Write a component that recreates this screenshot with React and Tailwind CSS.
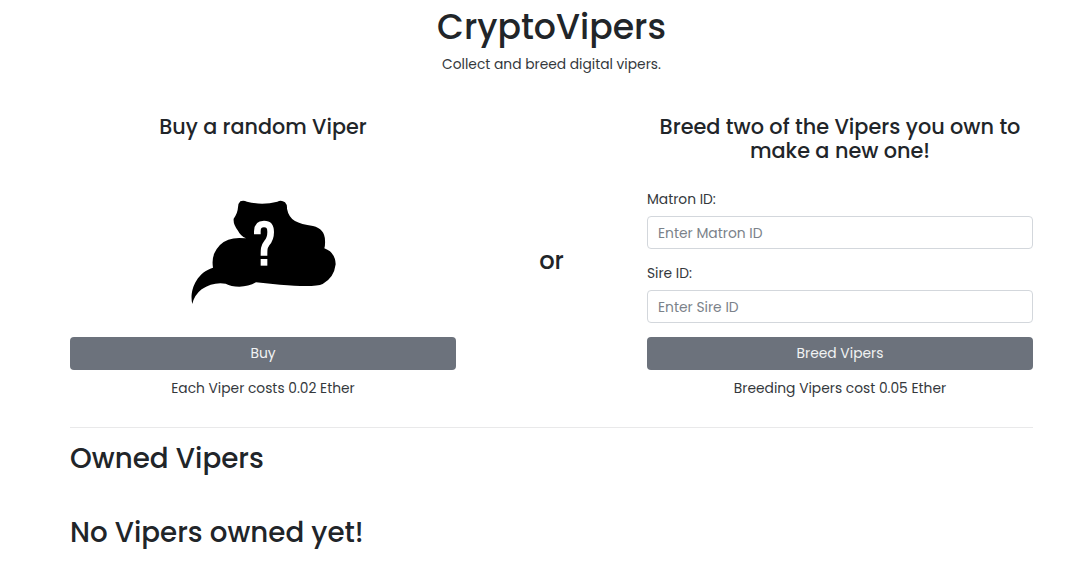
import React, { useState } from 'react';

const ViperSilhouette = () => (
  <svg className="h-[125px] w-[170px]" viewBox="0 0 510 375" aria-hidden="true">
    <path
      d="M181 34 Q190 30 201 35 Q246 47 292 35 Q304 29 315 37 Q322 44 321 56 Q326 82 345 93 Q363 103 399 108 Q434 116 435 151 Q436 164 433 175 Q466 187 467 223 Q462 264 428 282 Q404 293 300 284 L228 277 Q205 290 178 290 Q153 290 137 281 Q98 275 65 298 Q43 315 37 342 C28 309 44 250 99 233 Q95 209 103 190 Q117 159 145 149 Q166 141 198 145 Q181 137 174 122 Q159 103 161 86 Q173 70 174 52 Q175 39 181 34 Z"
      fill="#000"
    />
    <path
      d="M232 133 V124 C232 108 239 102 252 102 C266 102 272 110 272 126 C272 142 269 150 260 160 C252 170 252 177 252 197"
      fill="none"
      stroke="#fff"
      strokeWidth="20"
    />
    <rect x="242" y="207" width="20" height="20" fill="#fff" />
  </svg>
);

const Field = ({ id, label, placeholder, value, onChange }) => (
  <div className="mb-[14px]">
    <label htmlFor={id} className="mb-[6px] block h-[21px] text-[13.8px] leading-[21px]">
      {label}
    </label>
    <input
      id={id}
      value={value}
      onChange={(e) => onChange(e.target.value)}
      placeholder={placeholder}
      className="block h-[33px] w-full rounded-[4px] border border-[#d3d7dc] bg-white px-[10px] pt-[2px] text-[13.85px] placeholder:text-[#7b828a]"
    />
  </div>
);

const buttonStyle = 'block h-[33px] w-full rounded-[4px] bg-[#6c727c] text-[13.85px] text-[#f1f2f3]';

const App = () => {
  const [matronId, setMatronId] = useState('');
  const [sireId, setSireId] = useState('');

  return (
    <div className="min-h-[572px] bg-white font-['Poppins',Inter,sans-serif] text-[#212529]">
      <div className="ml-[70px] w-[963px]">
        {/* Header */}
        <header className="pt-[6px] text-center">
          <h1 className="text-[34.7px] leading-[42px] font-medium">CryptoVipers</h1>
          <p className="mt-[6px] text-[13.8px] leading-[22px] text-[#34383c]">Collect and breed digital vipers.</p>
        </header>

        {/* Buy and breed */}
        <main className="mt-[39px] flex h-[284px] justify-between">
          <section className="flex w-[386px] flex-col text-center">
            <h2 className="text-[20.7px] leading-[24px] font-medium">Buy a random Viper</h2>
            <div className="mt-[51px] flex justify-center pl-[4px]">
              <ViperSilhouette />
            </div>
            <button type="button" className={`${buttonStyle} mt-[22px]`}>
              Buy
            </button>
            <p className="mt-[8px] text-[13.8px] leading-[21px] text-[#34383c]">Each Viper costs 0.02 Ether</p>
          </section>

          <div className="pt-[131px] text-[24.2px] leading-[30px] font-medium">or</div>

          <section className="w-[386px]">
            <h2 className="mb-[26px] text-center text-[20.8px] leading-[24px] font-medium">
              Breed two of the Vipers you own to make a new one!
            </h2>
            <form onSubmit={(e) => e.preventDefault()} className="text-[#34383c]">
              <Field id="matron" label="Matron ID:" placeholder="Enter Matron ID" value={matronId} onChange={setMatronId} />
              <Field id="sire" label="Sire ID:" placeholder="Enter Sire ID" value={sireId} onChange={setSireId} />
              <button type="submit" className={buttonStyle}>
                Breed Vipers
              </button>
            </form>
            <p className="mt-[8px] text-center text-[13.8px] leading-[21px] text-[#34383c]">
              Breeding Vipers cost 0.05 Ether
            </p>
          </section>
        </main>

        {/* Collection */}
        <hr className="mt-[28px] border-[#e9e9ea]" />
        <h2 className="mt-[14px] text-[27.75px] leading-[34px] font-medium">Owned Vipers</h2>
        <h2 className="mt-[40px] text-[27.7px] leading-[34px] font-medium">No Vipers owned yet!</h2>
      </div>
    </div>
  );
};

export default App;
